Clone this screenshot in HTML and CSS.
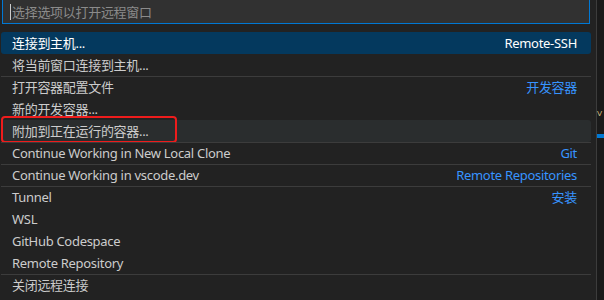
FILE: index.html
```html
<!DOCTYPE html>
<html lang="zh-CN">
<head>
    <meta charset="UTF-8">
    <meta name="viewport" content="width=device-width, initial-scale=1.0">
    <title>远程窗口</title>
    <link rel="stylesheet" href="styles.css">
</head>
<body>
    <div class="desk">
        <div class="picker">
            <div class="filter">
                <span class="caret"></span>
                <span class="placeholder">选择选项以打开远程窗口</span>
            </div>
            <div class="list">
                <div class="item selected"><span class="label">连接到主机...</span><span class="group">Remote-SSH</span></div>
                <div class="item"><span class="label">将当前窗口连接到主机...</span></div>
                <div class="item sep"><span class="label">打开容器配置文件</span><span class="group">开发容器</span></div>
                <div class="item"><span class="label">新的开发容器...</span></div>
                <div class="item hover"><span class="label">附加到正在运行的容器...</span><span class="mark"></span></div>
                <div class="item sep"><span class="label">Continue Working in New Local Clone</span><span class="group">Git</span></div>
                <div class="item sep"><span class="label">Continue Working in vscode.dev</span><span class="group">Remote Repositories</span></div>
                <div class="item sep"><span class="label">Tunnel</span><span class="group">安装</span></div>
                <div class="item"><span class="label">WSL</span></div>
                <div class="item"><span class="label">GitHub Codespace</span></div>
                <div class="item"><span class="label">Remote Repository</span></div>
                <div class="item sep"><span class="label">关闭远程连接</span></div>
            </div>
        </div>
        <div class="side">
            <span class="glyph">ⱽ</span>
            <span class="bar"></span>
        </div>
    </div>
</body>
</html>
```

FILE: styles.css
```css
body {
    margin: 0;
    padding: 0;
    background-color: #222222;
    font-family: "Noto Sans", "Noto Sans CJK SC", sans-serif;
    font-size: 13px;
    letter-spacing: -0.3px;
    color: #cccccc;
    overflow: hidden;
}

.desk {
    display: flex;
    height: 300px;
}

.picker {
    width: 596px;
    background-color: #222222;
    border-right: 1px solid #3c3c3c;
}

.filter {
    display: flex;
    align-items: center;
    gap: 1px;
    height: 28px;
    margin: -4px 6px 0 2px;
    padding: 0 7px;
    background-color: #313131;
    border: 1px solid #0078d4;
    box-sizing: border-box;
}

.caret {
    width: 1px;
    height: 16px;
    margin-top: 3px;
    background-color: #cccccc;
}

.placeholder {
    margin-top: 2px;
    color: #8b8b8b;
}

.list {
    margin: 8px 5px 0 1px;
}

.item {
    position: relative;
    display: flex;
    justify-content: space-between;
    height: 22px;
    line-height: 22px;
    padding: 0 14px 0 11px;
    border-radius: 3px;
}

.item.sep {
    border-top: 1px solid #3c3c3c;
    border-radius: 0;
    height: 21px;
    line-height: 21px;
}

.item.selected {
    background-color: #04395e;
    color: #ffffff;
}

.item.hover {
    background-color: #2a2d2e;
}

.group {
    color: #3794ff;
}

.item.selected .group {
    color: #ffffff;
}

.mark {
    position: absolute;
    left: 0;
    top: -4px;
    width: 176px;
    height: 27px;
    border: 2px solid #ee1c1c;
    border-radius: 4px;
    box-sizing: border-box;
}

.side {
    position: relative;
    flex: 1;
    background-color: #1a1a1a;
}

.glyph {
    position: absolute;
    left: 0;
    top: 106px;
    color: #d7ba7d;
    font-size: 13px;
}

.bar {
    position: absolute;
    left: 0;
    top: 134px;
    width: 7px;
    height: 4px;
    background-color: #0078d4;
}
```
